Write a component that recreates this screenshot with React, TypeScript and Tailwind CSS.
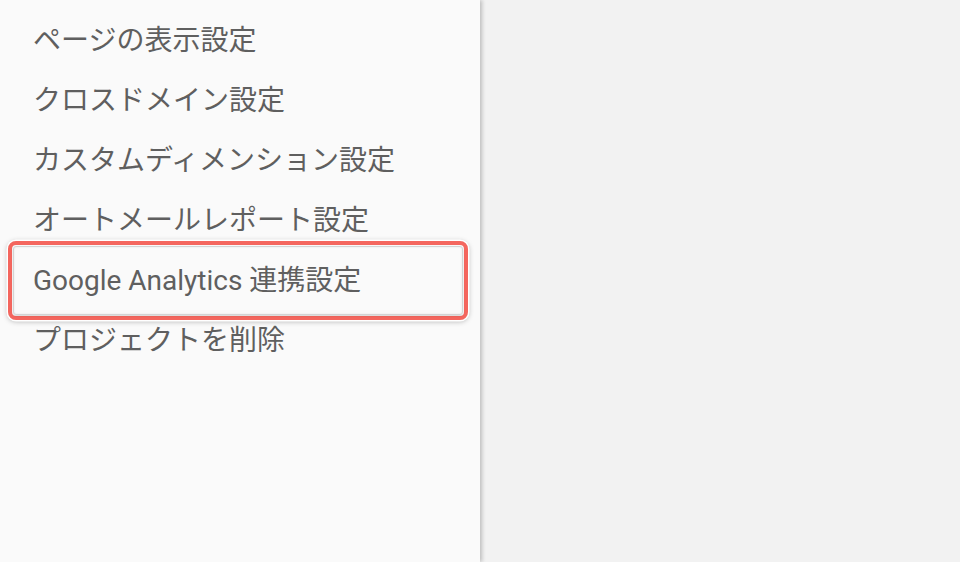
import React from 'react'

const items = [
  'ページの表示設定',
  'クロスドメイン設定',
  'カスタムディメンション設定',
  'オートメールレポート設定',
  'Google Analytics 連携設定',
  'プロジェクトを削除',
]

export default function App() {
  const active = 4

  return (
    <div className="flex h-[562px] w-[960px] overflow-hidden bg-[#f2f2f2]">
      <aside className="relative z-10 h-full w-[480px] shrink-0 bg-[#fafafa] pt-[11px] shadow-[2px_0_4px_rgba(0,0,0,0.22)]">
        <ul>
          {items.map((label, i) => (
            <li
              key={label}
              className="relative flex h-[60px] items-center pl-[33px] text-[28px] leading-none text-[#5f5f5f]"
              style={{ fontFamily: 'Roboto, "Noto Sans CJK JP", sans-serif' }}
            >
              {label}
              {i === active && (
                <div className="absolute -top-[10px] -bottom-[9px] left-[8px] right-[12px] rounded-[8px] border-4 border-solid border-[#f4665e] p-px shadow-[0_0_0_1.5px_#ffffff,0_1px_5px_1px_rgba(0,0,0,0.25)]">
                  <div className="h-full w-full rounded-[3px] border border-[#d4d4d4] shadow-[inset_0_0_2px_rgba(0,0,0,0.1),0_1px_2px_rgba(0,0,0,0.15)]" />
                </div>
              )}
            </li>
          ))}
        </ul>
      </aside>
      <main className="flex-1" />
    </div>
  )
}
